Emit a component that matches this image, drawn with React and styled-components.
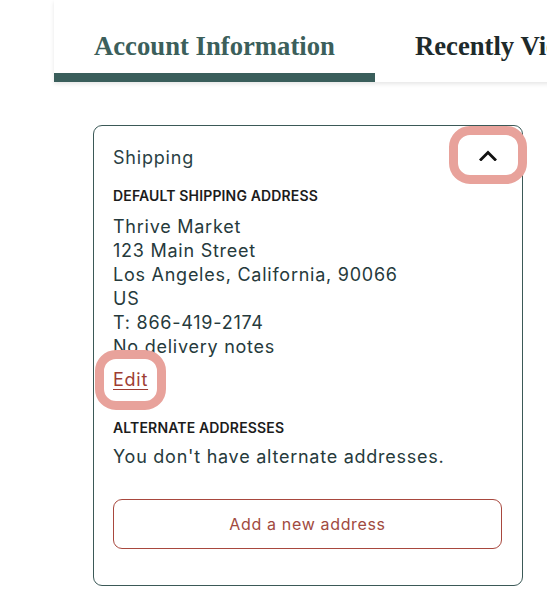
import styled, { createGlobalStyle } from 'styled-components';

const Global = createGlobalStyle`
  html, body {
    margin: 0;
    padding: 0;
    background: #ffffff;
    overflow: hidden;
  }
  body {
    font-family: "Inter", "Liberation Sans", sans-serif;
    color: #263a3c;
  }
`;

const Page = styled.div`
  width: 547px;
  height: 601px;
  overflow: hidden;
`;

const TabStrip = styled.div`
  display: flex;
  margin-left: 54px;
  width: max-content;
  min-width: 600px;
  box-shadow: 0 2px 4px rgba(0, 0, 0, 0.1);
`;

const Tab = styled.div`
  padding: 28px 40px 9px;
  font-family: "Liberation Serif", serif;
  font-weight: 700;
  font-size: 26.7px;
  line-height: 36px;
  white-space: nowrap;
  color: ${p => (p.$active ? '#3c5f5b' : '#1e2a2b')};
  border-bottom: 9px solid ${p => (p.$active ? '#3a5e5b' : 'transparent')};
`;

const Card = styled.section`
  margin: 43px 0 0 93px;
  width: 430px;
  box-sizing: border-box;
  border: 1px solid #3b5957;
  border-radius: 9px;
  padding: 20px 20px 36px 19px;
`;

const Header = styled.div`
  display: flex;
  align-items: center;
  justify-content: space-between;
  height: 24px;
`;

const Title = styled.h2`
  margin: 0;
  font-size: 18px;
  font-weight: 400;
  line-height: 24px;
  letter-spacing: 0.8px;
  color: #2a3f44;
`;

const Toggle = styled.button`
  width: 60px;
  height: 40px;
  margin: -11px -16px -5px 0;
  display: flex;
  align-items: center;
  justify-content: center;
  background: #ffffff;
  border: none;
  border-radius: 12px;
  outline: 9px solid #e8a29b;
  padding: 0;
  cursor: pointer;
`;

const Label = styled.h3`
  margin: ${p => p.$top}px 0 0;
  font-size: 14px;
  font-weight: 600;
  line-height: 18px;
  letter-spacing: 0.15px;
  text-transform: uppercase;
  color: #1c1c1c;
`;

const Lines = styled.div`
  margin-top: ${p => p.$top}px;
  font-size: 18px;
  line-height: 24px;
  letter-spacing: 0.75px;
  color: #263a3c;
`;

const EditLink = styled.a`
  display: inline-block;
  margin-left: -9px;
  padding: 9px;
  font-size: 18px;
  line-height: 24px;
  letter-spacing: 0.75px;
  color: #9e3d33;
  text-decoration: underline;
  text-underline-offset: 3px;
  border-radius: 12px;
  outline: 9px solid #e8a29b;
  cursor: pointer;
`;

const AddButton = styled.button`
  display: block;
  width: 100%;
  height: 50px;
  margin-top: 30px;
  background: #ffffff;
  border: 1px solid #a8483e;
  border-radius: 9px;
  font-family: "Inter", "Liberation Sans", sans-serif;
  font-size: 16px;
  letter-spacing: 0.65px;
  color: #a14a40;
  cursor: pointer;
`;

const ChevronUp = () => (
  <svg width="18" height="11" viewBox="0 0 18 11" fill="none">
    <polyline points="2,9.5 9,2.5 16,9.5" stroke="#111" strokeWidth="2.8" strokeLinecap="square" />
  </svg>
);

const address = [
  'Thrive Market',
  '123 Main Street',
  'Los Angeles, California, 90066',
  'US',
  'T: 866-419-2174',
  'No delivery notes',
];

export default function App() {
  return (
    <Page>
      <Global />
      <TabStrip>
        <Tab $active>Account Information</Tab>
        <Tab>Recently Viewed</Tab>
      </TabStrip>
      <Card>
        <Header>
          <Title>Shipping</Title>
          <Toggle aria-label="Collapse shipping">
            <ChevronUp />
          </Toggle>
        </Header>
        <Label $top={17}>Default Shipping Address</Label>
        <Lines $top={10}>
          {address.map(line => (
            <div key={line}>{line}</div>
          ))}
        </Lines>
        <EditLink>Edit</EditLink>
        <Label $top={18}>Alternate Addresses</Label>
        <Lines $top={8}>You don't have alternate addresses.</Lines>
        <AddButton>Add a new address</AddButton>
      </Card>
    </Page>
  );
}
